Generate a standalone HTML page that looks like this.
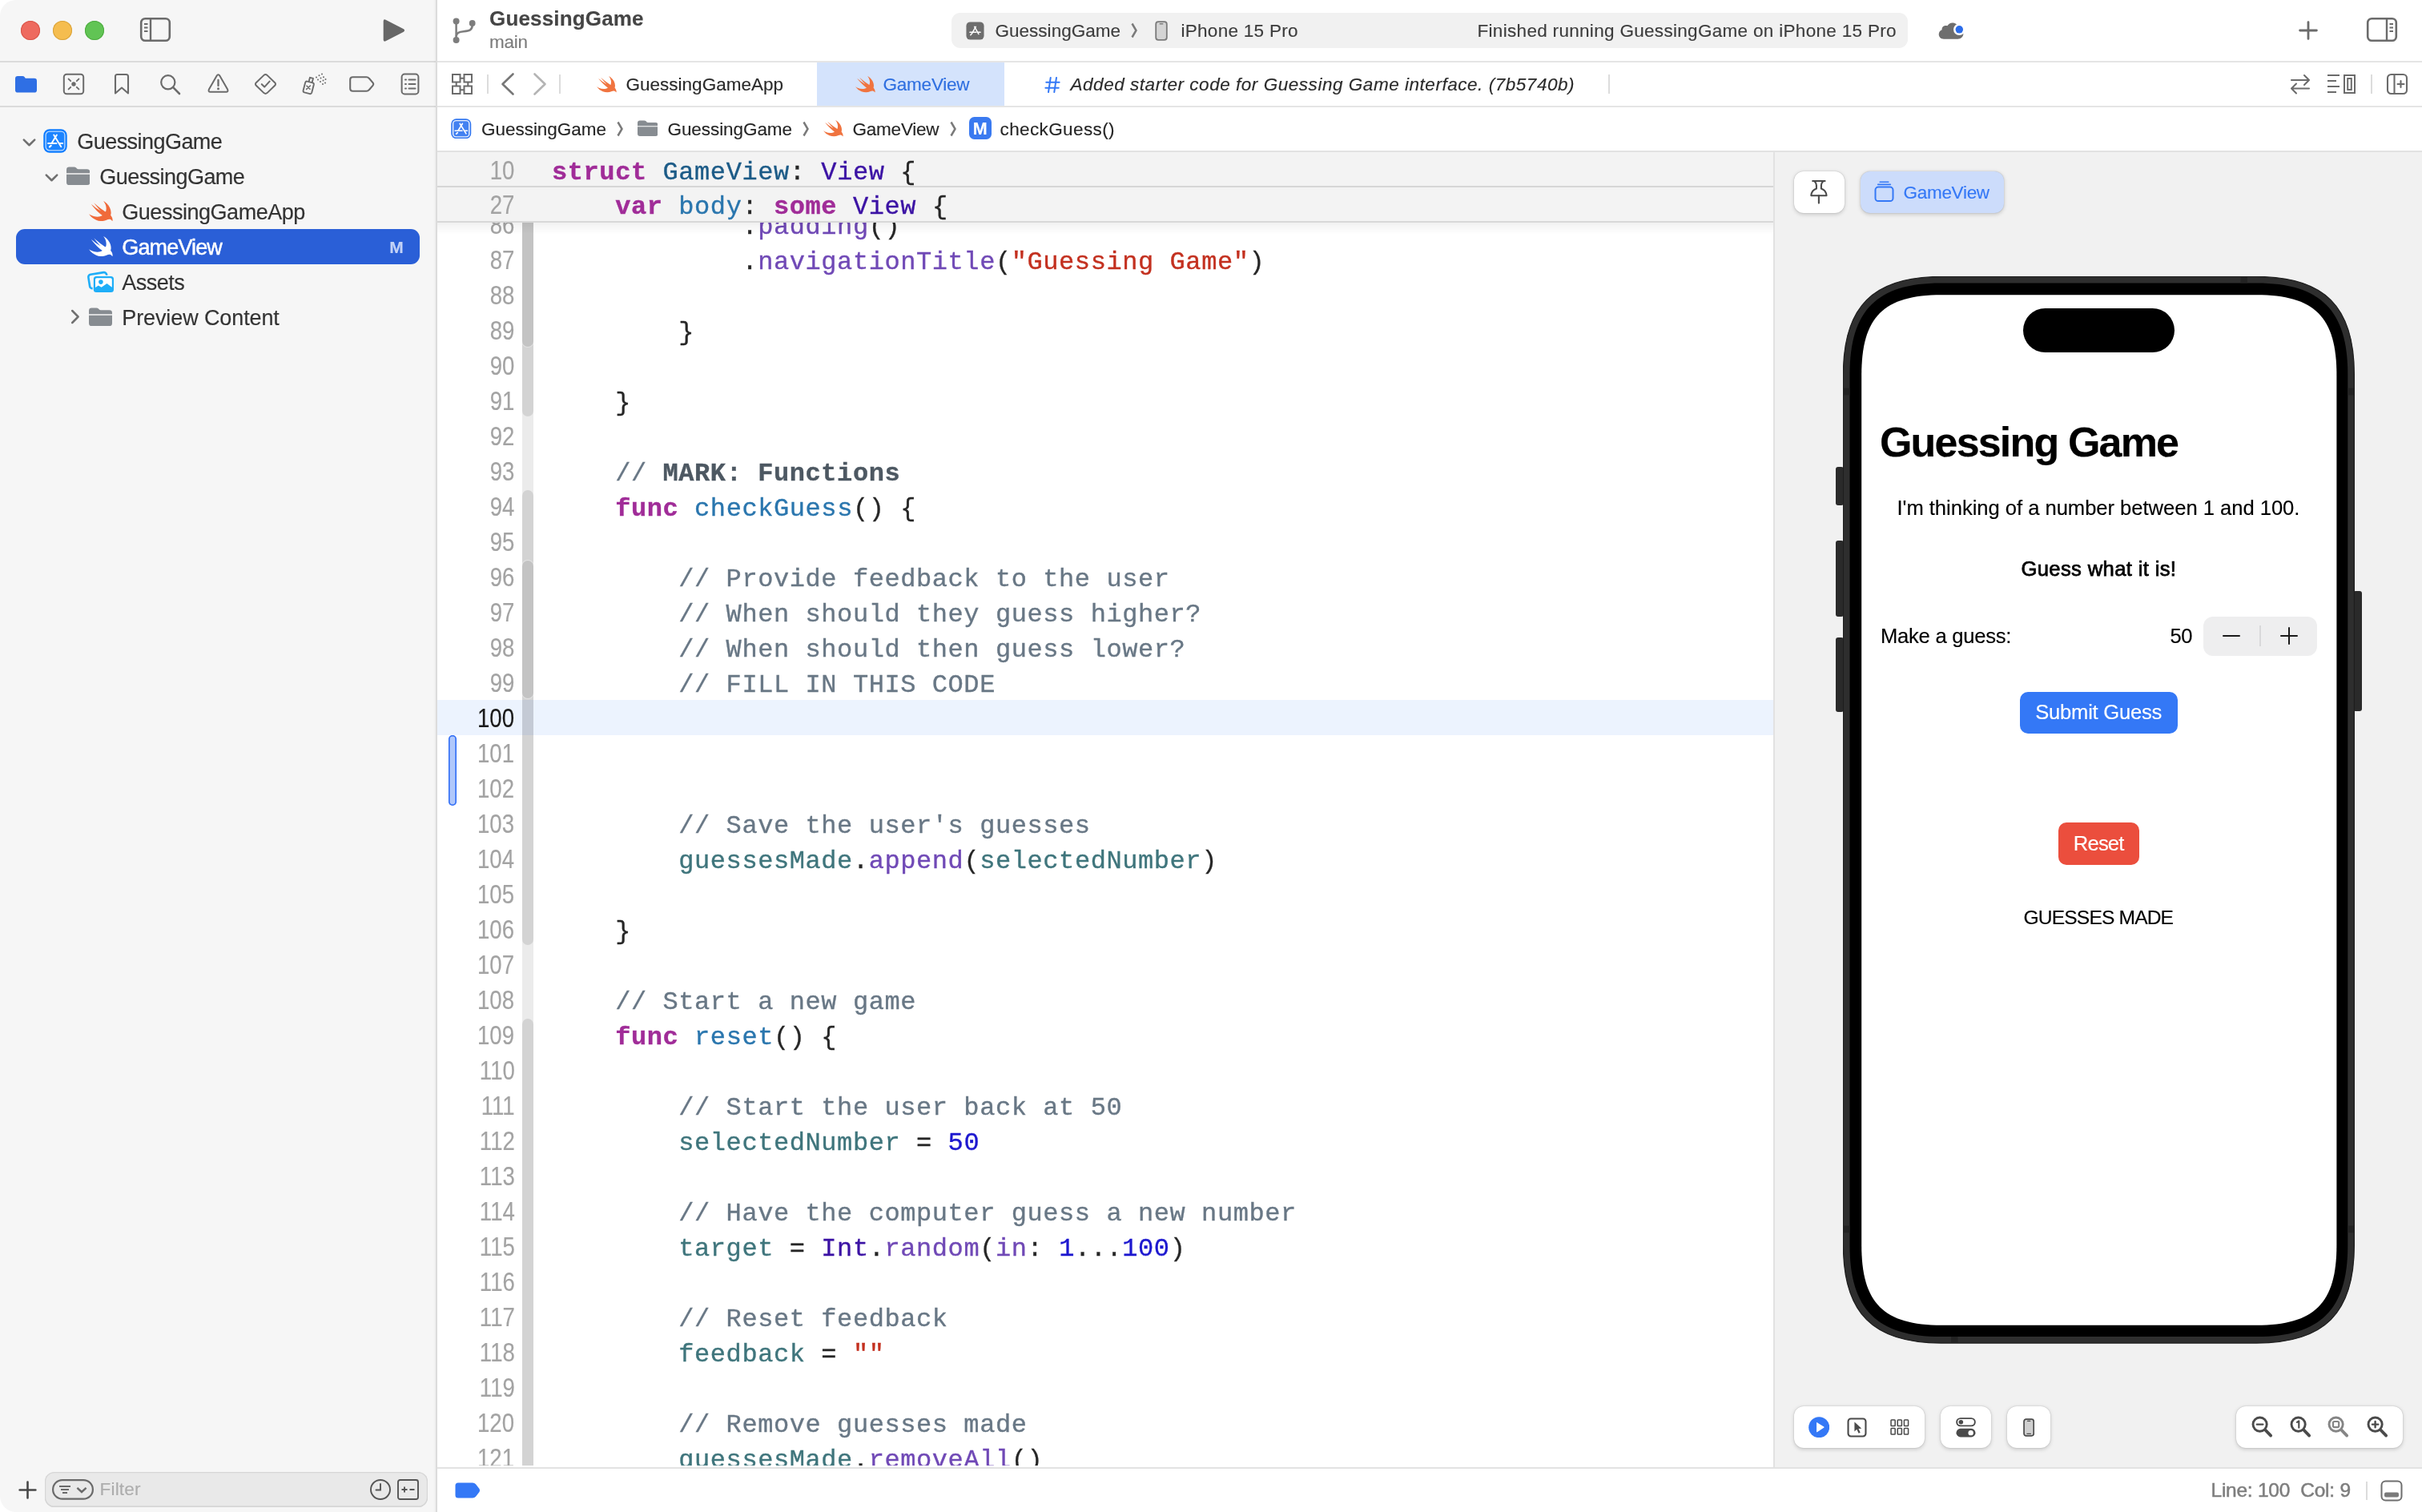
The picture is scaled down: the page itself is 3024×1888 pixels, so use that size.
<!DOCTYPE html>
<html lang="en"><head><meta charset="utf-8"><title>GuessingGame — GameView.swift</title>
<style>
html,body{margin:0;padding:0;background:#fff;}
body{width:3024px;height:1888px;overflow:hidden;position:relative;font-family:"Liberation Sans",sans-serif;}
#app{position:absolute;left:0;top:0;width:3024px;height:1888px;will-change:transform;}
#sk{position:absolute;left:0;top:0;width:3024px;height:1888px;-webkit-text-stroke:0.15px;}
.a{position:absolute;display:block;}
.t{position:absolute;white-space:pre;line-height:1;}
.ln{position:absolute;left:546px;width:1668px;height:44px;}
.ln .n{position:absolute;right:1571.5px;top:1.5px;line-height:44px;font-size:30px;color:#a3a3a3;transform:scale(0.92,1.12);transform-origin:100% 32.5px;}
.ln .c{position:absolute;left:143px;top:3.5px;line-height:44px;font-size:32px;letter-spacing:0.58px;white-space:pre;font-family:"Liberation Mono",monospace;color:#262626;-webkit-text-stroke:0.35px currentColor;}
.k{color:#a02c98;font-weight:bold}.td{color:#1c5b87}.od{color:#2a76ae}.ty{color:#3b12a4}.fn{color:#7049b6}.st{color:#c3301f}.nu{color:#1c17cf}.cm{color:#687785}.mk{color:#4d5862;font-weight:bold}.pv{color:#3f757c}
</style></head>
<body>
<div id="app"><div id="sk">
<div class="a" style="left:0px;top:0px;width:544px;height:1888px;background:#f6f6f6;border-radius:20px 0 0 20px;"></div>
<div class="a" style="left:0px;top:76px;width:544px;height:2px;background:#dbdbdb;"></div>
<div class="a" style="left:0px;top:132px;width:544px;height:2px;background:#dbdbdb;"></div>
<div class="a" style="left:546px;top:76px;width:2478px;height:2px;background:#e5e5e5;"></div>
<div class="a" style="left:546px;top:132px;width:2478px;height:2px;background:#e5e5e5;"></div>
<div class="a" style="left:546px;top:188px;width:2478px;height:2px;background:#e2e2e2;"></div>
<div class="a" style="left:541px;top:0;width:3px;height:1888px;background:linear-gradient(90deg,rgba(0,0,0,0),rgba(0,0,0,0.035));"></div>
<div class="a" style="left:544px;top:0px;width:2px;height:1888px;background:#dcdcdc;"></div>
<div class="a" style="left:26px;top:26px;width:24px;height:24px;border-radius:50%;background:#ee6a5f;box-shadow:inset 0 0 0 1px #d8554a;"></div>
<div class="a" style="left:66px;top:26px;width:24px;height:24px;border-radius:50%;background:#f5bd4f;box-shadow:inset 0 0 0 1px #d9a33c;"></div>
<div class="a" style="left:106px;top:26px;width:24px;height:24px;border-radius:50%;background:#61c454;box-shadow:inset 0 0 0 1px #4eab41;"></div>
<svg class="a" style="left:174px;top:21px;" width="40" height="32" viewBox="0 0 40 32"><rect x="2.2" y="2.2" width="35.6" height="27.6" rx="5" fill="none" stroke="#6b6b6b" stroke-width="2.6"/><line x1="14" y1="2" x2="14" y2="30" stroke="#6b6b6b" stroke-width="2.4"/><g stroke="#6b6b6b" stroke-width="2"><line x1="6" y1="9" x2="10.5" y2="9"/><line x1="6" y1="13.5" x2="10.5" y2="13.5"/><line x1="6" y1="18" x2="10.5" y2="18"/></g></svg>
<svg class="a" style="left:478px;top:23px;" width="30" height="30" viewBox="0 0 30 30"><path d="M0.7 3.4 Q0.7 0.3 3.6 1.7 L26 13.2 Q28.2 14.9 26 16.7 L3.6 28.2 Q0.7 29.6 0.7 26.5 Z" fill="#676767"/></svg>
<svg class="a" style="left:563px;top:21px;" width="33" height="35" viewBox="0 0 33 35"><g fill="none" stroke="#7d7d7d" stroke-width="2.5"><path d="M6.6 5.4 V29"/><path d="M26.7 8 V10.5 C26.7 16.5 23 17.6 16 18.2 C10 18.8 7 19.8 6.6 24.5"/></g><circle cx="6.6" cy="5.4" r="4" fill="#7d7d7d"/><circle cx="6.6" cy="29" r="4" fill="#7d7d7d"/><circle cx="26.7" cy="7.9" r="3.9" fill="#7d7d7d"/></svg>
<div class="t" style="left:611.00px;top:8px;font-size:26px;line-height:30px;color:#454545;letter-spacing:0.160px;font-weight:700;">GuessingGame</div>
<div class="t" style="left:611.00px;top:40px;font-size:22.5px;line-height:25px;color:#7c7c7c;letter-spacing:-0.253px;">main</div>
<div class="a" style="left:1188px;top:16px;width:1194px;height:44px;background:#f1f1f1;border-radius:11px;"></div>
<svg class="a" style="left:1206px;top:27px;" width="23" height="23" viewBox="0 0 26 26"><rect x="0.5" y="0.5" width="25" height="25" rx="5.5" fill="#6e6e6e"/><g stroke="#fff" stroke-width="1.7" stroke-linecap="round" fill="none"><path d="M13.9 7.2 L8.3 17.2"/><path d="M12.1 7.2 L18 17.6"/><path d="M5.6 15 H14.6"/><path d="M17.3 15 H20.4"/><path d="M6.6 19 L7.4 17.8"/></g></svg>
<div class="t" style="left:1242.50px;top:26px;font-size:22.5px;line-height:25px;color:#3d3d3d;letter-spacing:0.017px;">GuessingGame</div>
<svg class="a" style="left:1412px;top:28.0px;" width="9" height="20" viewBox="0 0 9 19"><path d="M1.5 1 L6.5 9.5 L1.5 18" fill="none" stroke="#7a7a7a" stroke-width="2.5" stroke-linejoin="miter" stroke-linecap="butt"/></svg>
<svg class="a" style="left:1442px;top:26px;" width="16" height="25" viewBox="0 0 16 25"><rect x="1.2" y="1.2" width="13.6" height="22.6" rx="3" fill="#d4d4d4" stroke="#7a7a7a" stroke-width="1.8"/><rect x="5.5" y="3" width="5" height="1.6" rx="0.8" fill="#7a7a7a"/></svg>
<div class="t" style="left:1474.50px;top:26px;font-size:22.5px;line-height:25px;color:#3d3d3d;letter-spacing:0.285px;">iPhone 15 Pro</div>
<div class="t" style="left:1844.50px;top:26px;font-size:22.5px;line-height:25px;color:#3d3d3d;letter-spacing:0.311px;">Finished running GuessingGame on iPhone 15 Pro</div>
<svg class="a" style="left:2418px;top:25px;" width="38" height="28" viewBox="0 0 38 28"><path d="M9 23.7 C5 23.7 2.7 21 2.7 17.8 C2.7 15 4.4 12.9 6.6 12.2 C6.2 9 8.6 6.8 11.4 6.9 C12.2 6.9 12.8 7 13.4 7.3 C14.8 4.8 17 3.4 19.6 3.4 C23.5 3.4 26.8 6 27.4 10 C31 10.4 33.4 13.2 33.4 16.8 C33.4 20.8 30.4 23.7 26.4 23.7 Z" fill="#6e6e6e"/><circle cx="28.3" cy="11.8" r="7.3" fill="#fff"/><circle cx="28.3" cy="11.8" r="4.75" fill="#2b6cea"/></svg>
<svg class="a" style="left:2869px;top:25px;" width="26" height="26" viewBox="0 0 26 26"><path d="M13 2.6 V23.4 M2.6 13 H23.4" stroke="#6b6b6b" stroke-width="2.8" stroke-linecap="round"/></svg>
<svg class="a" style="left:2954px;top:21px;" width="40" height="32" viewBox="0 0 40 32"><rect x="2.2" y="2.2" width="35.6" height="27.6" rx="5" fill="none" stroke="#6b6b6b" stroke-width="2.6"/><line x1="26" y1="2" x2="26" y2="30" stroke="#6b6b6b" stroke-width="2.4"/><g stroke="#6b6b6b" stroke-width="2"><line x1="29.5" y1="9" x2="34" y2="9"/><line x1="29.5" y1="13.5" x2="34" y2="13.5"/><line x1="29.5" y1="18" x2="34" y2="18"/></g></svg>
<svg class="a" style="left:563px;top:91px;" width="28" height="28" viewBox="0 0 28 28"><g fill="none" stroke="#6b6b6b" stroke-width="2"><rect x="2" y="2" width="9.5" height="9.5"/><rect x="16.5" y="2" width="9.5" height="9.5"/><rect x="2" y="16.5" width="9.5" height="9.5"/><rect x="16.5" y="16.5" width="9.5" height="9.5"/><path d="M11.5 6.7 H16.5 M6.7 11.5 V16.5 M21.3 11.5 V16.5 M11.5 21.3 H16.5"/></g></svg>
<div class="a" style="left:608px;top:93px;width:2px;height:24px;background:#dcdcdc;"></div>
<svg class="a" style="left:624px;top:90px;" width="20" height="30" viewBox="0 0 20 30"><path d="M16.5 2.5 L3.5 15 L16.5 27.5" fill="none" stroke="#777" stroke-width="2.6" stroke-linecap="round" stroke-linejoin="round"/></svg>
<svg class="a" style="left:664px;top:90px;" width="20" height="30" viewBox="0 0 20 30"><path d="M3.5 2.5 L16.5 15 L3.5 27.5" fill="none" stroke="#b4b4b4" stroke-width="2.6" stroke-linecap="round" stroke-linejoin="round"/></svg>
<div class="a" style="left:698px;top:93px;width:2px;height:24px;background:#dcdcdc;"></div>
<svg class="a" style="left:745.2px;top:95px;" width="24.8" height="20.8" viewBox="2.45 3.4 18.2 16.5" preserveAspectRatio="none"><path d="M13.543 3.41c4.114 2.47 6.545 7.162 5.549 11.131-.024.093-.05.181-.076.272l.002.001c2.062 2.538 1.5 5.258 1.236 4.745-1.072-2.086-3.066-1.568-4.088-1.043a6.803 6.803 0 0 1-.281.158l-.02.012-.002.002c-2.115 1.123-4.957 1.205-7.812-.022a12.568 12.568 0 0 1-5.64-4.838c.649.48 1.35.902 2.097 1.252 3.019 1.414 6.051 1.311 8.197-.002C9.651 12.73 7.101 9.67 5.146 7.191a10.628 10.628 0 0 1-1.005-1.384c2.34 2.142 6.038 4.83 7.365 5.576C8.69 8.408 6.208 4.743 6.324 4.86c4.436 4.47 8.528 6.996 8.528 6.996.154.085.27.154.36.213.085-.215.16-.437.224-.668.708-2.588-.09-5.548-1.893-7.992z" fill="#f07440"/></svg>
<div class="t" style="left:781.50px;top:93px;font-size:22.5px;line-height:25px;color:#2b2b2b;letter-spacing:0.012px;">GuessingGameApp</div>
<div class="a" style="left:1020px;top:78px;width:234px;height:54px;background:#d4e3fc;"></div>
<svg class="a" style="left:1068.3px;top:95px;" width="24.8" height="20.8" viewBox="2.45 3.4 18.2 16.5" preserveAspectRatio="none"><path d="M13.543 3.41c4.114 2.47 6.545 7.162 5.549 11.131-.024.093-.05.181-.076.272l.002.001c2.062 2.538 1.5 5.258 1.236 4.745-1.072-2.086-3.066-1.568-4.088-1.043a6.803 6.803 0 0 1-.281.158l-.02.012-.002.002c-2.115 1.123-4.957 1.205-7.812-.022a12.568 12.568 0 0 1-5.64-4.838c.649.48 1.35.902 2.097 1.252 3.019 1.414 6.051 1.311 8.197-.002C9.651 12.73 7.101 9.67 5.146 7.191a10.628 10.628 0 0 1-1.005-1.384c2.34 2.142 6.038 4.83 7.365 5.576C8.69 8.408 6.208 4.743 6.324 4.86c4.436 4.47 8.528 6.996 8.528 6.996.154.085.27.154.36.213.085-.215.16-.437.224-.668.708-2.588-.09-5.548-1.893-7.992z" fill="#f07440"/></svg>
<div class="t" style="left:1102.50px;top:93px;font-size:22.5px;line-height:25px;color:#2f6fe0;letter-spacing:-0.217px;">GameView</div>
<svg class="a" style="left:1304px;top:94.6px;" width="20" height="22" viewBox="0 0 22 24"><g stroke="#3478f6" stroke-width="2.2" stroke-linecap="round"><path d="M8.5 2 L5.5 22 M16.5 2 L13.5 22 M2.5 8.5 H20.5 M1.5 16 H19.5"/></g></svg>
<div class="t" style="left:1336.50px;top:93px;font-size:22.5px;line-height:25px;color:#2b2b2b;letter-spacing:0.535px;font-style:italic;">Added starter code for Guessing Game interface. (7b5740b)</div>
<div class="a" style="left:2008px;top:93px;width:2px;height:24px;background:#dcdcdc;"></div>
<svg class="a" style="left:2858px;top:91px;" width="28" height="28" viewBox="0 0 28 28"><g fill="none" stroke="#6b6b6b" stroke-width="2.1" stroke-linecap="round" stroke-linejoin="round"><path d="M3 9 H25 M19 3 L25 9 L19 15"/><path d="M25 19.5 H3 M9 13.5 L3 19.5 L9 25.5"/></g></svg>
<svg class="a" style="left:2904px;top:91px;" width="40" height="28" viewBox="0 0 40 28"><g fill="none" stroke="#6b6b6b" stroke-width="2"><path d="M2 3 H17 M2 10 H13 M2 17 H17 M2 24 H13"/><rect x="23" y="3" width="13" height="22"/><rect x="27.2" y="7" width="4.6" height="14"/></g></svg>
<div class="a" style="left:2960px;top:93px;width:2px;height:24px;background:#dcdcdc;"></div>
<svg class="a" style="left:2979px;top:91px;" width="28" height="28" viewBox="0 0 28 28"><g fill="none" stroke="#6b6b6b" stroke-width="2.1"><rect x="2" y="2" width="24" height="24" rx="4.5"/><path d="M10.5 2 V26"/><path d="M14.5 14 H22.5 M18.5 10 V18" stroke-linecap="round"/></g></svg>
<svg class="a" style="left:563px;top:147.5px;" width="25.5" height="25.5" viewBox="0 0 30 30"><rect x="0.3" y="0.3" width="29.4" height="29.4" rx="7.6" fill="#3478f0"/><rect x="3.1" y="3.1" width="23.8" height="23.8" rx="4.6" fill="#fff" fill-opacity="0.07" stroke="#fff" stroke-opacity="0.9" stroke-width="1.7"/><g stroke="#fff" stroke-width="1.9" stroke-linecap="round" fill="none"><path d="M13.2 7.6 L22.3 22.2"/><path d="M16.9 7.6 L10.7 17.6"/><path d="M6 18 H16.5"/><path d="M20.6 18 H24.1"/><path d="M9.7 20.8 L8 22.4" stroke-width="2.2"/></g></svg>
<div class="t" style="left:601.00px;top:149px;font-size:22.5px;line-height:25px;color:#262626;letter-spacing:-0.028px;">GuessingGame</div>
<svg class="a" style="left:770px;top:150.5px;" width="9" height="20" viewBox="0 0 9 19"><path d="M1.5 1 L6.5 9.5 L1.5 18" fill="none" stroke="#7a7a7a" stroke-width="2.5" stroke-linejoin="miter" stroke-linecap="butt"/></svg>
<svg class="a" style="left:795.5px;top:150px;" width="25.5" height="20.5" viewBox="0 0 30 24" preserveAspectRatio="none"><path d="M0 4 Q0 0.5 3.5 0.5 H9.6 Q11.4 0.5 12.4 1.6 L13.6 2.9 Q14.2 3.4 15.2 3.4 H26.5 Q30 3.4 30 6.9 V8.5 H0 Z" fill="#878c91"/><path d="M0 9.8 H30 V20 Q30 23.5 26.5 23.5 H3.5 Q0 23.5 0 20 Z" fill="#878c91"/></svg>
<div class="t" style="left:833.50px;top:149px;font-size:22.5px;line-height:25px;color:#262626;letter-spacing:-0.073px;">GuessingGame</div>
<svg class="a" style="left:1002px;top:150.5px;" width="9" height="20" viewBox="0 0 9 19"><path d="M1.5 1 L6.5 9.5 L1.5 18" fill="none" stroke="#7a7a7a" stroke-width="2.5" stroke-linejoin="miter" stroke-linecap="butt"/></svg>
<svg class="a" style="left:1028px;top:150.3px;" width="24.8" height="20.8" viewBox="2.45 3.4 18.2 16.5" preserveAspectRatio="none"><path d="M13.543 3.41c4.114 2.47 6.545 7.162 5.549 11.131-.024.093-.05.181-.076.272l.002.001c2.062 2.538 1.5 5.258 1.236 4.745-1.072-2.086-3.066-1.568-4.088-1.043a6.803 6.803 0 0 1-.281.158l-.02.012-.002.002c-2.115 1.123-4.957 1.205-7.812-.022a12.568 12.568 0 0 1-5.64-4.838c.649.48 1.35.902 2.097 1.252 3.019 1.414 6.051 1.311 8.197-.002C9.651 12.73 7.101 9.67 5.146 7.191a10.628 10.628 0 0 1-1.005-1.384c2.34 2.142 6.038 4.83 7.365 5.576C8.69 8.408 6.208 4.743 6.324 4.86c4.436 4.47 8.528 6.996 8.528 6.996.154.085.27.154.36.213.085-.215.16-.437.224-.668.708-2.588-.09-5.548-1.893-7.992z" fill="#f07440"/></svg>
<div class="t" style="left:1064.50px;top:149px;font-size:22.5px;line-height:25px;color:#262626;letter-spacing:-0.217px;">GameView</div>
<svg class="a" style="left:1185.5px;top:150.5px;" width="9" height="20" viewBox="0 0 9 19"><path d="M1.5 1 L6.5 9.5 L1.5 18" fill="none" stroke="#7a7a7a" stroke-width="2.5" stroke-linejoin="miter" stroke-linecap="butt"/></svg>
<div class="a" style="left:1209.5px;top:146px;width:28.3px;height:28px;background:#3a7af0;border-radius:6.5px;"></div>
<div class="t" style="left:1214.75px;top:149px;font-size:21.5px;line-height:24px;color:#fff;font-weight:700;">M</div>
<div class="t" style="left:1248.50px;top:149px;font-size:22.5px;line-height:25px;color:#262626;letter-spacing:0.384px;">checkGuess()</div>
<div class="a" style="left:546px;top:1832px;width:2478px;height:2px;background:#e2e2e2;"></div>
<svg class="a" style="left:23px;top:1849px;" width="24" height="24" viewBox="0 0 24 24"><path d="M11.5 1.6 V21.4 M1.6 11.5 H21.4" stroke="#484848" stroke-width="2.6" stroke-linecap="round"/></svg>
<div class="a" style="left:56px;top:1838px;width:478px;height:43.5px;background:#e9e9e9;border-radius:12px;box-shadow:inset 0 0 0 1.2px #d6d6d6, inset 0 -1px 0 0.5px #cfcfcf;"></div>
<svg class="a" style="left:64px;top:1846px;" width="54" height="28" viewBox="0 0 54 28"><rect x="2.1" y="2.1" width="49.8" height="23.6" rx="11.8" fill="none" stroke="#6a6a6a" stroke-width="2.2"/><g stroke="#6a6a6a" stroke-width="2" fill="none"><path d="M10 10 H24 M12 14 H22 M14 18 H20"/><path d="M32.4 11.8 L38 17 L43.6 11.8" stroke-width="2.4" stroke-linejoin="miter"/></g></svg>
<div class="t" style="left:124.50px;top:1847px;font-size:22.5px;line-height:25px;color:#adadad;letter-spacing:0.201px;">Filter</div>
<svg class="a" style="left:461px;top:1846px;" width="28" height="28" viewBox="0 0 28 28"><circle cx="14" cy="14" r="12" fill="none" stroke="#555" stroke-width="1.9"/><path d="M14 7 V14.5 H8.5" fill="none" stroke="#555" stroke-width="1.9" stroke-linecap="round"/></svg>
<svg class="a" style="left:496px;top:1847px;" width="27" height="26" viewBox="0 0 27 26"><rect x="1" y="1" width="25" height="24" rx="2.5" fill="none" stroke="#555" stroke-width="1.9"/><path d="M5.5 13 H12.5 M9 9.5 V16.5 M15.5 13 H21.5" stroke="#555" stroke-width="1.9" fill="none"/></svg>
<svg class="a" style="left:568px;top:1851px;" width="32" height="20" viewBox="0 0 32 20"><path d="M4 0.5 H22 Q24.5 0.5 26 2.3 L30.5 8 Q31.8 10 30.5 12 L26 17.7 Q24.5 19.5 22 19.5 H4 Q0.5 19.5 0.5 16 V4 Q0.5 0.5 4 0.5Z" fill="#3478f6"/></svg>
<div class="t" style="left:2760.50px;top:1847px;font-size:24.5px;line-height:27px;color:#7e7e7e;letter-spacing:-0.244px;-webkit-text-stroke:0.5px #7e7e7e;">Line: 100  Col: 9</div>
<div class="a" style="left:2954px;top:1849.5px;width:2px;height:23.5px;background:#dcdcdc;"></div>
<svg class="a" style="left:2972px;top:1848px;" width="28" height="27" viewBox="0 0 28 27"><rect x="1.5" y="1.5" width="25" height="24" rx="5" fill="none" stroke="#6f6f6f" stroke-width="2"/><rect x="5" y="15.6" width="18" height="6" rx="2" fill="#7a7a7a"/></svg>
<svg class="a" style="left:18.5px;top:93.5px;" width="27" height="22.5" viewBox="0 0 30 24"><path d="M0 4 Q0 0.5 3.5 0.5 H10 Q12 0.5 13 2 L14.2 3.8 H26.5 Q30 3.8 30 7.3 V20 Q30 23.5 26.5 23.5 H3.5 Q0 23.5 0 20Z" fill="#2f6fe4"/></svg>
<svg class="a" style="left:78px;top:91px;" width="28" height="28" viewBox="0 0 28 28"><rect x="1.8" y="1.8" width="24.4" height="24.4" rx="3.5" fill="none" stroke="#6b6b6b" stroke-width="2"/><g stroke="#6b6b6b" stroke-width="1.9" stroke-linecap="round"><path d="M7.6 7.6 L10.2 10.2 M20.4 7.6 L17.8 10.2 M7.6 20.4 L10.2 17.8 M20.4 20.4 L17.8 17.8"/></g><circle cx="14" cy="14" r="2.7" fill="#6b6b6b"/></svg>
<svg class="a" style="left:142px;top:91px;" width="20" height="28" viewBox="0 0 20 28"><path d="M2 4.5 Q2 2 4.5 2 H15.5 Q18 2 18 4.5 V25.5 L10 18.5 L2 25.5Z" fill="none" stroke="#6b6b6b" stroke-width="2.1" stroke-linejoin="round"/></svg>
<svg class="a" style="left:198.5px;top:92px;" width="27" height="27" viewBox="0 0 27 27"><circle cx="10.8" cy="10.8" r="8.6" fill="none" stroke="#6b6b6b" stroke-width="2.2"/><path d="M17.2 17.2 L25 25" stroke="#6b6b6b" stroke-width="2.6" stroke-linecap="round"/></svg>
<svg class="a" style="left:258.5px;top:91px;" width="27" height="26" viewBox="0 0 27 26"><path d="M13.5 2.2 Q14.6 2.2 15.3 3.4 L25.2 20.8 Q26.2 23.6 23.4 23.8 H3.6 Q0.8 23.6 1.8 20.8 L11.7 3.4 Q12.4 2.2 13.5 2.2Z" fill="none" stroke="#6b6b6b" stroke-width="2" stroke-linejoin="round"/><path d="M13.5 9 V16" stroke="#6b6b6b" stroke-width="2.3" stroke-linecap="round"/><circle cx="13.5" cy="19.8" r="1.5" fill="#6b6b6b"/></svg>
<svg class="a" style="left:317px;top:91px;" width="29" height="28" viewBox="0 0 29 28"><path d="M14.5 2 Q15.6 2 16.5 2.9 L26.2 12.2 Q27.8 14 26.2 15.8 L16.5 25.1 Q14.5 26.8 12.5 25.1 L2.8 15.8 Q1.2 14 2.8 12.2 L12.5 2.9 Q13.4 2 14.5 2Z" fill="none" stroke="#6b6b6b" stroke-width="2" stroke-linejoin="round"/><path d="M9.8 14.2 L13.2 17.6 L19.6 10.6" fill="none" stroke="#6b6b6b" stroke-width="2.1" stroke-linecap="round" stroke-linejoin="round"/></svg>
<svg class="a" style="left:376px;top:91px;" width="33" height="29" viewBox="0 0 33 29"><g fill="none" stroke="#6b6b6b" stroke-width="1.9" stroke-linejoin="round"><path d="M5.2 12 Q5.8 10.2 7.6 10.6 L14.4 12.4 Q16.2 13 15.8 14.8 L13.2 24.8 Q12.6 26.6 10.8 26.2 L4 24.4 Q2.2 23.8 2.6 22Z"/><path d="M9.6 10.8 L11 5.8 L15 6.9 L13.6 11.9"/></g><g stroke="#6b6b6b" stroke-width="1.6" stroke-linecap="round"><path d="M7 16.2 L11 20.2 M11.4 16 L6.6 20.4"/></g><g fill="#6b6b6b"><circle cx="19" cy="5.5" r="1"/><circle cx="22.5" cy="3.2" r="1"/><circle cx="26" cy="1.6" r="1"/><circle cx="21" cy="8.5" r="1"/><circle cx="24.5" cy="6.5" r="1"/><circle cx="28" cy="5.2" r="1"/><circle cx="24" cy="11" r="1"/><circle cx="27.5" cy="9.5" r="1"/><circle cx="27" cy="14" r="1"/><circle cx="30.5" cy="8" r="1"/><circle cx="30" cy="12.5" r="1"/></g></svg>
<svg class="a" style="left:435.5px;top:95px;" width="32" height="20" viewBox="0 0 32 20"><path d="M4.5 1.2 H21.5 Q23.5 1.2 24.8 2.8 L29.6 8.4 Q30.8 10 29.6 11.6 L24.8 17.2 Q23.5 18.8 21.5 18.8 H4.5 Q1.2 18.8 1.2 15.5 V4.5 Q1.2 1.2 4.5 1.2Z" fill="none" stroke="#6b6b6b" stroke-width="2.1"/></svg>
<svg class="a" style="left:500px;top:91px;" width="24" height="28" viewBox="0 0 24 28"><rect x="1.6" y="1.6" width="20.8" height="24.8" rx="3.5" fill="none" stroke="#6b6b6b" stroke-width="2"/><g stroke="#6b6b6b" stroke-width="2" stroke-linecap="round"><path d="M6 8.5 H7 M10.5 8.5 H18.5 M6 14 H7 M10.5 14 H18.5 M6 19.5 H7 M10.5 19.5 H18.5"/></g></svg>
<svg class="a" style="left:26.5px;top:171.5px;" width="19" height="12" viewBox="0 0 19 12"><path d="M2.8 2.6 L9.5 9.2 L16.2 2.6" fill="none" stroke="#707070" stroke-width="2.6" stroke-linecap="round" stroke-linejoin="round"/></svg>
<svg class="a" style="left:54px;top:161px;" width="30" height="30" viewBox="0 0 30 30"><rect x="0.3" y="0.3" width="29.4" height="29.4" rx="7.6" fill="#0b7bff"/><rect x="3.1" y="3.1" width="23.8" height="23.8" rx="4.6" fill="#fff" fill-opacity="0.07" stroke="#fff" stroke-opacity="0.72" stroke-width="1.3"/><g stroke="#fff" stroke-width="1.9" stroke-linecap="round" fill="none"><path d="M13.2 7.6 L22.3 22.2"/><path d="M16.9 7.6 L10.7 17.6"/><path d="M6 18 H16.5"/><path d="M20.6 18 H24.1"/><path d="M9.7 20.8 L8 22.4" stroke-width="2.2"/></g></svg>
<div class="t" style="left:96.30px;top:162px;font-size:27px;line-height:30px;color:#333333;letter-spacing:-0.552px;">GuessingGame</div>
<svg class="a" style="left:55px;top:215.5px;" width="19" height="12" viewBox="0 0 19 12"><path d="M2.8 2.6 L9.5 9.2 L16.2 2.6" fill="none" stroke="#707070" stroke-width="2.6" stroke-linecap="round" stroke-linejoin="round"/></svg>
<svg class="a" style="left:83px;top:208.4px;" width="29.3" height="23.6" viewBox="0 0 30 24" preserveAspectRatio="none"><path d="M0 4 Q0 0.5 3.5 0.5 H9.6 Q11.4 0.5 12.4 1.6 L13.6 2.9 Q14.2 3.4 15.2 3.4 H26.5 Q30 3.4 30 6.9 V8.5 H0 Z" fill="#878c91"/><path d="M0 9.8 H30 V20 Q30 23.5 26.5 23.5 H3.5 Q0 23.5 0 20 Z" fill="#878c91"/></svg>
<div class="t" style="left:124.30px;top:206px;font-size:27px;line-height:30px;color:#333333;letter-spacing:-0.552px;">GuessingGame</div>
<svg class="a" style="left:111.1px;top:250.7px;" width="29.8" height="25.6" viewBox="2.45 3.4 18.2 16.5" preserveAspectRatio="none"><path d="M13.543 3.41c4.114 2.47 6.545 7.162 5.549 11.131-.024.093-.05.181-.076.272l.002.001c2.062 2.538 1.5 5.258 1.236 4.745-1.072-2.086-3.066-1.568-4.088-1.043a6.803 6.803 0 0 1-.281.158l-.02.012-.002.002c-2.115 1.123-4.957 1.205-7.812-.022a12.568 12.568 0 0 1-5.64-4.838c.649.48 1.35.902 2.097 1.252 3.019 1.414 6.051 1.311 8.197-.002C9.651 12.73 7.101 9.67 5.146 7.191a10.628 10.628 0 0 1-1.005-1.384c2.34 2.142 6.038 4.83 7.365 5.576C8.69 8.408 6.208 4.743 6.324 4.86c4.436 4.47 8.528 6.996 8.528 6.996.154.085.27.154.36.213.085-.215.16-.437.224-.668.708-2.588-.09-5.548-1.893-7.992z" fill="#f06a3a"/></svg>
<div class="t" style="left:152.30px;top:250px;font-size:27px;line-height:30px;color:#333333;letter-spacing:-0.472px;">GuessingGameApp</div>
<div class="a" style="left:20px;top:286px;width:504px;height:44px;background:#2a5fd7;border-radius:11px;"></div>
<svg class="a" style="left:111.1px;top:294.7px;" width="29.8" height="25.6" viewBox="2.45 3.4 18.2 16.5" preserveAspectRatio="none"><path d="M13.543 3.41c4.114 2.47 6.545 7.162 5.549 11.131-.024.093-.05.181-.076.272l.002.001c2.062 2.538 1.5 5.258 1.236 4.745-1.072-2.086-3.066-1.568-4.088-1.043a6.803 6.803 0 0 1-.281.158l-.02.012-.002.002c-2.115 1.123-4.957 1.205-7.812-.022a12.568 12.568 0 0 1-5.64-4.838c.649.48 1.35.902 2.097 1.252 3.019 1.414 6.051 1.311 8.197-.002C9.651 12.73 7.101 9.67 5.146 7.191a10.628 10.628 0 0 1-1.005-1.384c2.34 2.142 6.038 4.83 7.365 5.576C8.69 8.408 6.208 4.743 6.324 4.86c4.436 4.47 8.528 6.996 8.528 6.996.154.085.27.154.36.213.085-.215.16-.437.224-.668.708-2.588-.09-5.548-1.893-7.992z" fill="#fff"/></svg>
<div class="t" style="left:152.30px;top:294px;font-size:27px;line-height:30px;color:#fff;letter-spacing:-0.860px;-webkit-text-stroke:0.45px #fff;">GameView</div>
<div class="t" style="left:486.25px;top:297px;font-size:21px;line-height:23px;color:#c3d2f6;font-weight:700;">M</div>
<svg class="a" style="left:108px;top:337px;" width="36" height="30" viewBox="0 0 36 30"><g transform="rotate(-9 13 14)"><rect x="3.2" y="4.6" width="23" height="17.6" rx="3.2" fill="none" stroke="#1eaef8" stroke-width="2.6"/></g><rect x="7.6" y="6.8" width="27.6" height="22.4" rx="4.6" fill="#f6f6f6"/><rect x="8.8" y="7.9" width="25.2" height="20.1" rx="3.5" fill="#1eaef8"/><path d="M11 12 Q11 10.2 12.8 10.2 H30 Q31.8 10.2 31.8 12 V21.8 L25.5 17 L18.6 21.7 L14.9 19.4 L11 22 Z" fill="#fff"/><circle cx="17.9" cy="15.1" r="2.8" fill="#1eaef8"/></svg>
<div class="t" style="left:152.30px;top:338px;font-size:27px;line-height:30px;color:#333333;letter-spacing:-0.505px;">Assets</div>
<svg class="a" style="left:87.6px;top:385.9px;" width="12" height="19" viewBox="0 0 12 19"><path d="M2.2 2 L9.6 9.5 L2.2 17" fill="none" stroke="#707070" stroke-width="2.5" stroke-linecap="round" stroke-linejoin="round"/></svg>
<svg class="a" style="left:111px;top:384.3px;" width="29" height="23.6" viewBox="0 0 30 24" preserveAspectRatio="none"><path d="M0 4 Q0 0.5 3.5 0.5 H9.6 Q11.4 0.5 12.4 1.6 L13.6 2.9 Q14.2 3.4 15.2 3.4 H26.5 Q30 3.4 30 6.9 V8.5 H0 Z" fill="#878c91"/><path d="M0 9.8 H30 V20 Q30 23.5 26.5 23.5 H3.5 Q0 23.5 0 20 Z" fill="#878c91"/></svg>
<div class="t" style="left:152.30px;top:382px;font-size:27px;line-height:30px;color:#333333;letter-spacing:-0.112px;">Preview Content</div>
<div class="a" style="left:0;top:190px;width:2214px;height:1640px;overflow:hidden;"><div class="a" style="left:0;top:-190px;width:2214px;height:1888px;">
<div class="a" style="left:546px;top:874px;width:1668px;height:44px;background:#ecf3fe;"></div>
<div class="a" style="left:652px;top:190px;width:14px;height:1700px;background:#ebebeb;"></div>
<div class="a" style="left:652px;top:190px;width:14px;height:330px;background:#d3d3d3;border-radius:0 0 7px 7px;"></div>
<div class="a" style="left:652px;top:611.5px;width:14px;height:568.0px;background:#d3d3d3;border-radius:7px;"></div>
<div class="a" style="left:652px;top:1271.5px;width:14px;height:700px;background:#d3d3d3;border-radius:7px;"></div>
<div class="a" style="left:652px;top:190px;width:14px;height:243px;background:#c3c3c3;border-radius:0 0 7px 7px;box-shadow:0 0 0 1px rgba(255,255,255,0.35);"></div>
<div class="a" style="left:652px;top:699.5px;width:14px;height:172.0px;background:#c3c3c3;border-radius:7px;box-shadow:0 0 0 1px rgba(255,255,255,0.35);"></div>
<div class="a" style="left:652px;top:874px;width:14px;height:44px;background:#c4cad5;"></div>
<div class="a" style="left:560px;top:918px;width:10px;height:88px;background:#afc7fb;border-radius:5px;box-shadow:inset 0 0 0 1.6px #2f6df6;"></div>
<div class="ln" style="top:258px"><span class="n">86</span><span class="c">            .<span class="fn">padding</span>()</span></div>
<div class="ln" style="top:302px"><span class="n">87</span><span class="c">            .<span class="fn">navigationTitle</span>(<span class="st">&quot;Guessing Game&quot;</span>)</span></div>
<div class="ln" style="top:346px"><span class="n">88</span><span class="c"></span></div>
<div class="ln" style="top:390px"><span class="n">89</span><span class="c">        }</span></div>
<div class="ln" style="top:434px"><span class="n">90</span><span class="c"></span></div>
<div class="ln" style="top:478px"><span class="n">91</span><span class="c">    }</span></div>
<div class="ln" style="top:522px"><span class="n">92</span><span class="c"></span></div>
<div class="ln" style="top:566px"><span class="n">93</span><span class="c">    <span class="cm">// </span><span class="mk">MARK: Functions</span></span></div>
<div class="ln" style="top:610px"><span class="n">94</span><span class="c">    <span class="k">func</span> <span class="od">checkGuess</span>() {</span></div>
<div class="ln" style="top:654px"><span class="n">95</span><span class="c"></span></div>
<div class="ln" style="top:698px"><span class="n">96</span><span class="c">        <span class="cm">// Provide feedback to the user</span></span></div>
<div class="ln" style="top:742px"><span class="n">97</span><span class="c">        <span class="cm">// When should they guess higher?</span></span></div>
<div class="ln" style="top:786px"><span class="n">98</span><span class="c">        <span class="cm">// When should then guess lower?</span></span></div>
<div class="ln" style="top:830px"><span class="n">99</span><span class="c">        <span class="cm">// FILL IN THIS CODE</span></span></div>
<div class="ln" style="top:874px"><span class="n" style="color:#1a1a1a">100</span><span class="c"></span></div>
<div class="ln" style="top:918px"><span class="n">101</span><span class="c"></span></div>
<div class="ln" style="top:962px"><span class="n">102</span><span class="c"></span></div>
<div class="ln" style="top:1006px"><span class="n">103</span><span class="c">        <span class="cm">// Save the user&#x27;s guesses</span></span></div>
<div class="ln" style="top:1050px"><span class="n">104</span><span class="c">        <span class="pv">guessesMade</span>.<span class="fn">append</span>(<span class="pv">selectedNumber</span>)</span></div>
<div class="ln" style="top:1094px"><span class="n">105</span><span class="c"></span></div>
<div class="ln" style="top:1138px"><span class="n">106</span><span class="c">    }</span></div>
<div class="ln" style="top:1182px"><span class="n">107</span><span class="c"></span></div>
<div class="ln" style="top:1226px"><span class="n">108</span><span class="c">    <span class="cm">// Start a new game</span></span></div>
<div class="ln" style="top:1270px"><span class="n">109</span><span class="c">    <span class="k">func</span> <span class="od">reset</span>() {</span></div>
<div class="ln" style="top:1314px"><span class="n">110</span><span class="c"></span></div>
<div class="ln" style="top:1358px"><span class="n">111</span><span class="c">        <span class="cm">// Start the user back at 50</span></span></div>
<div class="ln" style="top:1402px"><span class="n">112</span><span class="c">        <span class="pv">selectedNumber</span> = <span class="nu">50</span></span></div>
<div class="ln" style="top:1446px"><span class="n">113</span><span class="c"></span></div>
<div class="ln" style="top:1490px"><span class="n">114</span><span class="c">        <span class="cm">// Have the computer guess a new number</span></span></div>
<div class="ln" style="top:1534px"><span class="n">115</span><span class="c">        <span class="pv">target</span> = <span class="ty">Int</span>.<span class="fn">random</span>(<span class="fn">in</span>: <span class="nu">1</span>...<span class="nu">100</span>)</span></div>
<div class="ln" style="top:1578px"><span class="n">116</span><span class="c"></span></div>
<div class="ln" style="top:1622px"><span class="n">117</span><span class="c">        <span class="cm">// Reset feedback</span></span></div>
<div class="ln" style="top:1666px"><span class="n">118</span><span class="c">        <span class="pv">feedback</span> = <span class="st">&quot;&quot;</span></span></div>
<div class="ln" style="top:1710px"><span class="n">119</span><span class="c"></span></div>
<div class="ln" style="top:1754px"><span class="n">120</span><span class="c">        <span class="cm">// Remove guesses made</span></span></div>
<div class="ln" style="top:1798px"><span class="n">121</span><span class="c">        <span class="pv">guessesMade</span>.<span class="fn">removeAll</span>()</span></div>
</div></div>
<div class="a" style="left:546px;top:190px;width:1668px;height:42px;background:#f3f3f3;"></div>
<div class="a" style="left:546px;top:232px;width:1668px;height:2px;background:#d6d6d6;"></div>
<div class="a" style="left:546px;top:234px;width:1668px;height:42px;background:#f3f3f3;"></div>
<div class="a" style="left:546px;top:276px;width:1668px;height:2px;background:#d8d8d8;"></div>
<div class="a" style="left:546px;top:278px;width:1668px;height:14px;background:linear-gradient(rgba(0,0,0,0.055),rgba(0,0,0,0));"></div>
<div class="ln" style="top:190px"><span class="n">10</span><span class="c"><span class="k">struct</span> <span class="td">GameView</span>: <span class="ty">View</span> {</span></div>
<div class="ln" style="top:233px"><span class="n">27</span><span class="c">    <span class="k">var</span> <span class="od">body</span>: <span class="k">some</span> <span class="ty">View</span> {</span></div>
<div class="a" style="left:2214px;top:190px;width:2px;height:1642px;background:#e2e2e2;"></div>
<div class="a" style="left:2216px;top:190px;width:808px;height:1642px;background:#f1f1f1;"></div>
<div class="a" style="left:2240px;top:214px;width:63px;height:52px;background:#ffffff;border-radius:12px;box-shadow:0 1.5px 5px rgba(0,0,0,0.17),0 0 1.5px rgba(0,0,0,0.22);"></div>
<svg class="a" style="left:2258px;top:223px;" width="26" height="34" viewBox="0 0 26 34"><g fill="none" stroke="#4a4a4a" stroke-width="2.1" stroke-linecap="round" stroke-linejoin="round"><path d="M5.2 3 H20.6"/><path d="M7.4 3.3 Q9.9 5.6 9.9 8.2 V12.4 Q3.8 14.4 3.3 21.2 H22.5 Q22 14.4 15.9 12.4 V8.2 Q15.9 5.6 18.4 3.3"/><path d="M12.9 21.4 V30.6"/></g></svg>
<div class="a" style="left:2323px;top:214px;width:179px;height:52px;background:#ccdcfb;border-radius:12px;box-shadow:0 1.5px 5px rgba(0,0,0,0.17),0 0 1.5px rgba(0,0,0,0.22);"></div>
<svg class="a" style="left:2339.5px;top:225.5px;" width="25" height="26.5" viewBox="0 0 25 26.5"><g fill="none" stroke="#3478f6" stroke-width="2"><rect x="1.5" y="7.6" width="22" height="17.4" rx="3.6"/><path d="M4.8 4.3 H20.2" stroke-linecap="round" stroke-width="1.8"/><path d="M7.2 1.2 H17.8" stroke-linecap="round" stroke-width="1.6"/></g></svg>
<div class="t" style="left:2376.50px;top:228px;font-size:22.5px;line-height:25px;color:#3478f6;letter-spacing:-0.288px;">GameView</div>
<div class="a" style="left:2291.5px;top:583px;width:10px;height:48px;background:#2a2a2a;border-radius:3px;"></div>
<div class="a" style="left:2291.5px;top:675px;width:10px;height:95px;background:#2a2a2a;border-radius:3px;"></div>
<div class="a" style="left:2291.5px;top:796px;width:10px;height:93px;background:#2a2a2a;border-radius:3px;"></div>
<div class="a" style="left:2938px;top:738px;width:10.5px;height:150px;background:#2a2a2a;border-radius:3px;"></div>
<svg class="a" style="left:2300.5px;top:345px;" width="639" height="1332.5" viewBox="0 0 639 1332.5"><path d="M122.40 0.40 H516.40 C601.19 0.40 638.40 37.61 638.40 122.40 V1210.10 C638.40 1294.89 601.19 1332.10 516.40 1332.10 H122.40 C37.61 1332.10 0.40 1294.89 0.40 1210.10 V122.40 C0.40 37.61 37.61 0.40 122.40 0.40Z" fill="#2e2e2e" stroke="#1d1d1d" stroke-width="1.2"/><path d="M122.10 8.50 H516.70 C596.22 8.50 630.30 42.58 630.30 122.10 V1210.40 C630.30 1289.92 596.22 1324.00 516.70 1324.00 H122.10 C42.58 1324.00 8.50 1289.92 8.50 1210.40 V122.10 C8.50 42.58 42.58 8.50 122.10 8.50Z" fill="#000"/><rect x="496.5" y="0.9" width="8.5" height="7.6" fill="#232323"/><rect x="135" y="1324" width="8.5" height="7.6" fill="#232323"/><rect x="0.9" y="139.6" width="7.6" height="8.8" fill="#232323"/><rect x="630.5" y="139.6" width="7.6" height="8.8" fill="#232323"/><rect x="0.9" y="1185.5" width="7.6" height="8.8" fill="#232323"/><rect x="630.5" y="1185.5" width="7.6" height="8.8" fill="#232323"/><path d="M123.20 23.20 H516.40 C588.90 23.20 616.40 50.70 616.40 123.20 V1209.80 C616.40 1282.30 588.90 1309.80 516.40 1309.80 H123.20 C50.70 1309.80 23.20 1282.30 23.20 1209.80 V123.20 C23.20 50.70 50.70 23.20 123.20 23.20Z" fill="#fff"/></svg>
<div class="a" style="left:2526px;top:385.3px;width:189px;height:55px;background:#000;border-radius:27.5px;"></div>
<div class="t" style="left:2347.00px;top:523px;font-size:52px;line-height:58px;color:#000;letter-spacing:-1.827px;font-weight:700;">Guessing Game</div>
<div class="t" style="left:2368.50px;top:620px;font-size:25.6px;line-height:28px;color:#000;letter-spacing:-0.033px;">I&#x27;m thinking of a number between 1 and 100.</div>
<div class="t" style="left:2523.50px;top:696px;font-size:25.6px;line-height:28px;color:#000;letter-spacing:0.356px;-webkit-text-stroke:0.75px #000;">Guess what it is!</div>
<div class="t" style="left:2348.00px;top:780px;font-size:25.6px;line-height:28px;color:#000;letter-spacing:-0.248px;">Make a guess:</div>
<div class="t" style="left:2709.50px;top:780px;font-size:25.6px;line-height:28px;color:#000;letter-spacing:-0.467px;">50</div>
<div class="a" style="left:2751px;top:770px;width:141.5px;height:48.5px;background:#eeeeef;border-radius:12px;"></div>
<div class="a" style="left:2775px;top:793px;width:22px;height:2.3px;background:#1a1a1a;border-radius:1px;"></div>
<div class="a" style="left:2821px;top:781px;width:1.6px;height:26px;background:#d8d8da;"></div>
<div class="a" style="left:2847px;top:793px;width:22px;height:2.3px;background:#1a1a1a;border-radius:1px;"></div>
<div class="a" style="left:2856.9px;top:783px;width:2.3px;height:22px;background:#1a1a1a;border-radius:1px;"></div>
<div class="a" style="left:2522px;top:864px;width:196.5px;height:52px;background:#3478f6;border-radius:10px;"></div>
<div class="t" style="left:2541.30px;top:875px;font-size:25.6px;line-height:28px;color:#fff;letter-spacing:-0.252px;">Submit Guess</div>
<div class="a" style="left:2569.7px;top:1027.3px;width:101.8px;height:52.3px;background:#eb4e3d;border-radius:10px;"></div>
<div class="t" style="left:2588.85px;top:1039px;font-size:25.6px;line-height:28px;color:#fff;letter-spacing:-0.842px;">Reset</div>
<div class="t" style="left:2526.55px;top:1132px;font-size:24.6px;line-height:27px;color:#000;letter-spacing:-0.850px;">GUESSES MADE</div>
<div class="a" style="left:2240px;top:1756px;width:163px;height:52px;background:#fff;border-radius:12px;box-shadow:0 1.5px 5px rgba(0,0,0,0.17),0 0 1.5px rgba(0,0,0,0.22);"></div>
<div class="a" style="left:2423px;top:1756px;width:63px;height:52px;background:#fff;border-radius:12px;box-shadow:0 1.5px 5px rgba(0,0,0,0.17),0 0 1.5px rgba(0,0,0,0.22);"></div>
<div class="a" style="left:2506px;top:1756px;width:54px;height:52px;background:#fff;border-radius:12px;box-shadow:0 1.5px 5px rgba(0,0,0,0.17),0 0 1.5px rgba(0,0,0,0.22);"></div>
<div class="a" style="left:2792px;top:1756px;width:208px;height:52px;background:#fff;border-radius:12px;box-shadow:0 1.5px 5px rgba(0,0,0,0.17),0 0 1.5px rgba(0,0,0,0.22);"></div>
<svg class="a" style="left:2258px;top:1769px;" width="26.4" height="26.4" viewBox="0 0 27 27"><circle cx="13.5" cy="13.5" r="13.3" fill="#3478f6"/><path d="M10.3 7.8 Q10.3 7 11 7.4 L19.6 12.9 Q20.4 13.5 19.6 14.1 L11 19.6 Q10.3 20 10.3 19.2Z" fill="#fff"/></svg>
<svg class="a" style="left:2305.5px;top:1769.5px;" width="25" height="25" viewBox="0 0 26 26"><rect x="1.6" y="1.6" width="22.8" height="22.8" rx="3.6" fill="none" stroke="#4a4a4a" stroke-width="2.2"/><path d="M9.8 5.6 L9.8 18.2 L12.8 15.4 L15.2 20.6 L17.4 19.6 L15 14.6 L19 14.4Z" fill="#4a4a4a"/></svg>
<svg class="a" style="left:2360px;top:1772px;" width="24" height="20" viewBox="0 0 25 21"><rect x="1.0" y="1" width="5.4" height="8" rx="0.8" fill="none" stroke="#4a4a4a" stroke-width="1.6"/><rect x="9.6" y="1" width="5.4" height="8" rx="0.8" fill="none" stroke="#4a4a4a" stroke-width="1.6"/><rect x="18.2" y="1" width="5.4" height="8" rx="0.8" fill="none" stroke="#4a4a4a" stroke-width="1.6"/><rect x="1.0" y="12" width="5.4" height="8" rx="0.8" fill="none" stroke="#4a4a4a" stroke-width="1.6"/><rect x="9.6" y="12" width="5.4" height="8" rx="0.8" fill="none" stroke="#4a4a4a" stroke-width="1.6"/><rect x="18.2" y="12" width="5.4" height="8" rx="0.8" fill="none" stroke="#4a4a4a" stroke-width="1.6"/></svg>
<svg class="a" style="left:2442px;top:1770px;" width="25" height="25" viewBox="0 0 26 26"><rect x="1.2" y="1.2" width="23.6" height="9.6" rx="4.8" fill="none" stroke="#4a4a4a" stroke-width="2"/><circle cx="6.6" cy="6" r="2.9" fill="#4a4a4a"/><rect x="0.5" y="14.4" width="25" height="11" rx="5.5" fill="#4a4a4a"/><circle cx="19.4" cy="19.9" r="3.3" fill="#fff"/></svg>
<svg class="a" style="left:2526px;top:1771px;" width="14.3" height="23" viewBox="0 0 15 24"><rect x="1.1" y="1.1" width="12.8" height="21.8" rx="2.8" fill="#cfcfcf" stroke="#4a4a4a" stroke-width="1.8"/><rect x="5.2" y="2.8" width="4.6" height="1.4" rx="0.7" fill="#4a4a4a"/><rect x="4.5" y="19.6" width="6" height="1.2" rx="0.6" fill="#4a4a4a"/></svg>
<svg class="a" style="left:2810.5px;top:1768px;" width="27" height="28" viewBox="0 0 27 28"><circle cx="10.6" cy="10.6" r="8.6" fill="none" stroke="#4a4a4a" stroke-width="2.9"/><path d="M17.4 17.6 L24.2 24.6" stroke="#4a4a4a" stroke-width="3.7" stroke-linecap="round"/><path d="M6.9 10.6 H14.3" stroke="#4a4a4a" stroke-width="2.4" stroke-linecap="round"/></svg>
<svg class="a" style="left:2858.5px;top:1768px;" width="27" height="28" viewBox="0 0 27 28"><circle cx="10.6" cy="10.6" r="8.6" fill="none" stroke="#4a4a4a" stroke-width="2.9"/><path d="M17.4 17.6 L24.2 24.6" stroke="#4a4a4a" stroke-width="3.7" stroke-linecap="round"/><path d="M9 7.9 L11.3 6.4 V14.8" fill="none" stroke="#4a4a4a" stroke-width="2.1" stroke-linecap="round" stroke-linejoin="round"/></svg>
<svg class="a" style="left:2906px;top:1768px;" width="27" height="28" viewBox="0 0 27 28"><circle cx="10.6" cy="10.6" r="8.6" fill="none" stroke="#858585" stroke-width="2.9"/><path d="M17.4 17.6 L24.2 24.6" stroke="#858585" stroke-width="3.7" stroke-linecap="round"/><rect x="7" y="7" width="7.2" height="7.2" rx="1.6" fill="none" stroke="#858585" stroke-width="2.2"/></svg>
<svg class="a" style="left:2954.5px;top:1768px;" width="27" height="28" viewBox="0 0 27 28"><circle cx="10.6" cy="10.6" r="8.6" fill="none" stroke="#4a4a4a" stroke-width="2.9"/><path d="M17.4 17.6 L24.2 24.6" stroke="#4a4a4a" stroke-width="3.7" stroke-linecap="round"/><path d="M6.9 10.6 H14.3 M10.6 6.9 V14.3" stroke="#4a4a4a" stroke-width="2.4" stroke-linecap="round"/></svg>
</div></div>
</body></html>
